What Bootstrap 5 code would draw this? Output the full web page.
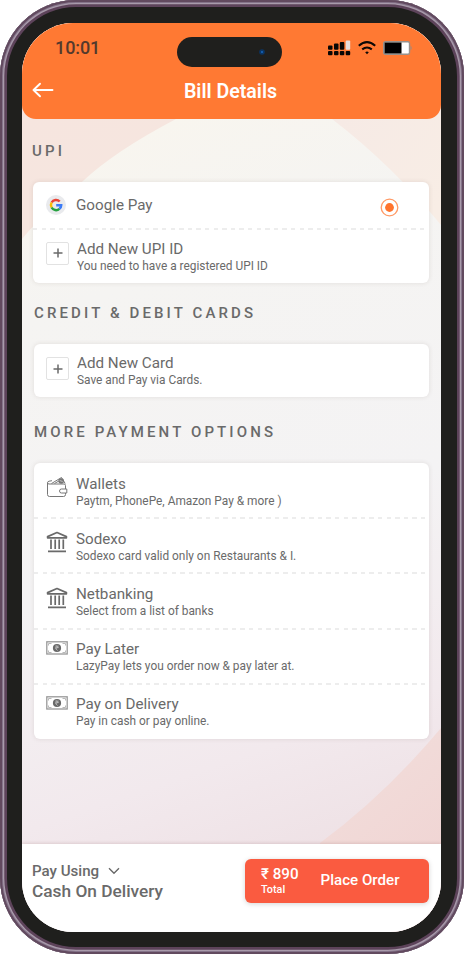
<!DOCTYPE html>
<html lang="en">
<head>
<meta charset="utf-8">
<meta name="viewport" content="width=device-width, initial-scale=1">
<title>Bill Details</title>
<link href="https://cdn.jsdelivr.net/npm/bootstrap@5.3.0/dist/css/bootstrap.min.css" rel="stylesheet">
<style>
body{font-family:Roboto,"Noto Sans",sans-serif;background:#fff;color:#6a6a6a;overflow:hidden}
.phone{width:464px;height:954px;border-radius:76px;background:#1f1f1d;padding:23px 23px 22px 22px;box-shadow:inset 0 0 0 2px #624a5f,inset 0 0 0 3px #85748a,inset 0 0 0 4.3px #a99bab,inset 0 0 0 7px #5d435a}
.screen{border-radius:51px;background:#f5f3f2;isolation:isolate}
.backdrop{inset:0;z-index:-1}
.topbar{height:96px;background:#ff7933;border-radius:0 0 14px 14px}
.statusline{height:50px;padding-left:33px;padding-right:28px}
.clock{font-size:18px;font-weight:500;color:#54392c;width:122px;line-height:20px;letter-spacing:-.1px}
.island{width:105px;height:30px;border-radius:15px;background:#1f1f1d;margin-top:7px;padding-right:17px}
.titleline{height:34px}
.titleline h1{font-size:19.6px;font-weight:600;color:#fff;line-height:24px;padding-top:3px}
.side{width:42px;padding-left:10px}
.side-end{width:44px}
.content{padding:0 12px}
.heading{font-size:15px;font-weight:500;line-height:18px;letter-spacing:3.12px;color:#6a6a6a;margin:0}
.panel{background:#fff;border-radius:6px;box-shadow:0 0 5px rgba(60,40,30,.11)}
.opt{padding:11px 12px 0 13px}
.opt-more{padding-left:12px;padding-top:11.500px}
.dashes{height:2px;margin:-1px 0;background:repeating-linear-gradient(90deg,#ededed 0 4.4px,transparent 4.4px 8.6px)}
.glyph{width:30px;flex:none}
.ttl{font-size:15.200px;line-height:18px;color:#6a6a6a}
.sub{font-size:11.880px;line-height:16px;color:#6a6a6a}
.plusbox{width:23px;height:23px;border:1px solid #e2e2e2;border-radius:2px}
.paybar{height:88px;background:#fff;padding:15px 12px 0 10px;box-shadow:0 -1px 3px rgba(120,50,50,.16)}
.using{font-size:15.100px;font-weight:500;line-height:20px}
.method{font-size:17.300px;font-weight:500;line-height:21px}
.order{width:184px;height:44px;border:0;border-radius:6px;background:#fa5b40;color:#fff;padding:0 0 0 16px;box-shadow:0 1px 5px rgba(0,0,0,.17)}
.amount{font-size:15.200px;font-weight:500;line-height:17px}
.total{font-size:10.800px;font-weight:500;line-height:13px}
.place{font-size:15.100px;font-weight:500;margin-left:22px;margin-top:-1px}
</style>
<script src="https://cdn.jsdelivr.net/npm/bootstrap@5.3.0/dist/js/bootstrap.bundle.min.js"></script>
</head>
<body>
<svg width="0" height="0" class="position-absolute">
  <defs>
    <symbol id="bank" viewBox="0 0 22 22"><path d="M1.600 6.800V5.600L11 1.500l9.400 4.100v1.200z" fill="none" stroke="#6a6a6a" stroke-width="1.700" stroke-linejoin="round"/><path d="M5 8.500v9.500M9.200 8.500v9.500M13.200 8.500v9.500M17.300 8.500v9.500M2 20.300h18" stroke="#6a6a6a" stroke-width="1.700" fill="none"/></symbol>
    <symbol id="cash" viewBox="0 0 22 14"><rect x=".8" y=".8" width="20.400" height="12.200" fill="none" stroke="#999" stroke-width="1.300"/><path d="M2.500 4.500V2.500h3M16.500 2.500h3v2M2.500 9.500v2h3M19.500 9.500v2h-3" fill="none" stroke="#b0b0b0" stroke-width=".9"/><circle cx="11" cy="7" r="4.100" fill="#686868"/><path d="M9.200 5.100h3.500M9.200 6.600h3.500M10 5.100c3 0 2 2.500-.5 2.500l2.200 2" fill="none" stroke="#ccc" stroke-width=".7"/></symbol>
    <symbol id="plus" viewBox="0 0 10 10"><path d="M5 .5v9M.5 5h9" stroke="#6a6a6a" stroke-width="1.500"/></symbol>
  </defs>
</svg>
<main class="phone">
  <div class="screen d-flex flex-column h-100 overflow-hidden position-relative">
    <svg class="backdrop position-absolute" width="419" height="909" viewBox="22 23 419 909">
      <defs>
        <linearGradient id="base" gradientUnits="userSpaceOnUse" x1="80" y1="60" x2="380" y2="920"><stop offset="0" stop-color="#faf6ed"/><stop offset=".25" stop-color="#f5f4f2"/><stop offset=".55" stop-color="#f4f3f4"/><stop offset=".78" stop-color="#f2e9ed"/><stop offset="1" stop-color="#ecdce0"/></linearGradient>
        <linearGradient id="peach" gradientUnits="userSpaceOnUse" x1="22" y1="119" x2="60" y2="230"><stop offset="0" stop-color="#f6e5df"/><stop offset="1" stop-color="#f6e6df"/></linearGradient>
        <linearGradient id="peachEnd" gradientUnits="userSpaceOnUse" x1="340" y1="119" x2="441" y2="200"><stop offset="0" stop-color="#f6eae5"/><stop offset="1" stop-color="#f8ede5"/></linearGradient>
        <linearGradient id="rose" x1="0" y1="0" x2=".5" y2="1"><stop offset="0" stop-color="#f2dfdc"/><stop offset="1" stop-color="#f0d4d3"/></linearGradient>
      </defs>
      <path fill="url(#base)" d="M22 23h419v909H22z"/>
      <path fill="url(#peach)" d="M22 23H300L176 119Q115 151 83 181Q45 211 22 239z"/>
      <path fill="url(#peachEnd)" d="M260 23H441V225Q392 165 332 119z"/>
      <path fill="url(#rose)" d="M441 728Q385 795 320 843V932H441z"/>
    </svg>
    <header class="topbar flex-shrink-0">
      <div class="statusline d-flex align-items-center">
        <div class="clock">10:01</div>
        <div class="island d-flex align-items-center justify-content-end">
          <svg width="6" height="6" viewBox="0 0 6 6"><circle cx="3" cy="3" r="2.800" fill="#0a3565"/><circle cx="3" cy="3" r="1" fill="#1769c0"/></svg>
        </div>
        <div class="d-flex align-items-center ms-auto" style="gap:7px">
          <svg width="23" height="16" viewBox="0 0 23 16"><g fill="#080706"><rect y="5.500" width="4.500" height="4.300" rx="1"/><rect x="6" y="3.500" width="4.500" height="6.300" rx="1"/><rect x="11.800" y="2" width="4.500" height="7.800" rx="1"/><rect y="11" width="4.500" height="4.300" rx="1"/><rect x="6" y="11" width="4.500" height="4.300" rx="1"/><rect x="11.800" y="11" width="4.500" height="4.300" rx="1"/><rect x="17.700" y="11" width="4.500" height="4.300" rx="1"/></g><rect x="17.700" y=".5" width="4.500" height="9.300" rx="1" fill="#e6dedb"/></svg>
          <svg width="18" height="14" viewBox="0 0 18 14"><path d="M.8 4.800Q9-2.400 17.200 4.800M4.200 8.400Q9 4.600 13.800 8.400" fill="none" stroke="#0c0806" stroke-width="2.100"/><path d="M7.200 11.300Q9 9.900 10.800 11.300L9 13.200z" fill="#0c0806"/></svg>
          <svg width="30" height="14" viewBox="0 0 30 14"><rect x=".7" y=".7" width="25.800" height="12.600" rx="1.500" fill="#fff" stroke="#98918c" stroke-width="1.400"/><path fill="#000" d="M1.500 1.500h17v11h-17z"/><path d="M27.500 4.500Q30 7 27.500 9.500z" fill="#a48a7a"/></svg>
        </div>
      </div>
      <div class="titleline d-flex align-items-center">
        <div class="side d-flex"><svg width="22" height="16" viewBox="0 0 22 16"><path d="M8 1.700L1.500 8 8 14.300M1.500 8H20.500" fill="none" stroke="#fff" stroke-width="1.900" stroke-linecap="round" stroke-linejoin="round"/></svg></div>
        <h1 class="flex-grow-1 text-center mb-0">Bill Details</h1>
        <div class="side-end"></div>
      </div>
    </header>
    <div class="content flex-grow-1">
      <h2 class="heading" style="margin:23px 0 22px -2px">UPI</h2>
      <section class="panel d-flex flex-column" style="height:101px;margin-left:-1px">
        <div class="opt d-flex align-items-center pt-0" style="height:46.500px">
          <div class="glyph"><svg width="20" height="20" viewBox="0 0 20 20" style="margin-top:-2px"><circle cx="10" cy="10" r="10" fill="#e9eaed"/><g fill="none" stroke-width="2.500"><path d="M5.600 7.500A5.100 5.100 0 0 1 13.700 6.500" stroke="#ea4335"/><path d="M5.600 7.500a5.100 5.100 0 0 0 0 5" stroke="#fbbc05"/><path d="M5.600 12.500a5.100 5.100 0 0 0 7.800 1.400" stroke="#24a13e"/><path d="M13.400 13.900A5 5 0 0 0 15.200 10.200H10.200" stroke="#3b7bf6"/></g></svg></div>
          <div class="ttl flex-grow-1">Google Pay</div>
          <svg width="19" height="19" viewBox="0 0 19 19" style="margin:4px 18px 0 0"><circle cx="9.500" cy="9.500" r="8.300" fill="#fff" stroke="#ff9a66" stroke-width="1.300"/><circle cx="9.500" cy="9.500" r="4.400" fill="#ff742d"/></svg>
        </div>
        <div class="dashes"></div>
        <div class="opt d-flex">
          <div class="glyph me-0" style="width:31px"><div class="plusbox d-flex align-items-center justify-content-center" style="margin-top:2px"><svg width="10" height="10"><use href="#plus"/></svg></div></div>
          <div><div class="ttl">Add New UPI ID</div><div class="sub">You need to have a registered UPI ID</div></div>
        </div>
      </section>
      <h2 class="heading" style="margin:21px 0 22px">CREDIT &amp; DEBIT CARDS</h2>
      <section class="panel" style="height:53px">
        <div class="opt d-flex" style="padding-top:10px;padding-left:12px">
          <div class="glyph" style="width:31px"><div class="plusbox d-flex align-items-center justify-content-center" style="margin-top:3px"><svg width="10" height="10"><use href="#plus"/></svg></div></div>
          <div><div class="ttl">Add New Card</div><div class="sub">Save and Pay via Cards.</div></div>
        </div>
      </section>
      <h2 class="heading" style="margin:26px 0 22px">MORE PAYMENT OPTIONS</h2>
      <section class="panel d-flex flex-column" style="height:276px">
        <div class="opt opt-more d-flex flex-fill"><div class="glyph">
          <svg width="22" height="22" viewBox="0 0 22 22"><g fill="none" stroke="#777" stroke-width="1"><path d="M19.500 13V9.500Q19.500 8 18 8H3Q1.500 8 1.500 6.800M1.500 6.800V18.500Q1.500 20.500 3.500 20.500H17.500Q19.500 20.500 19.500 18.500V17"/><path d="M20.800 13H15.500q-2 0-2 2t2 2h5.300z"/><path d="M1.500 6.800Q1.500 5.500 3 5.200L6 4.700M5.500 7.500L15.500 1.500l3.700 6M8.500 7.500l7-4"/></g><circle cx="15.200" cy="5" r="2.800" fill="#777"/><path d="M13.700 4.500l3 1" stroke="#ddd" stroke-width=".7"/></svg>
        </div><div><div class="ttl">Wallets</div><div class="sub">Paytm, PhonePe, Amazon Pay &amp; more )</div></div></div>
        <div class="dashes"></div>
        <div class="opt opt-more d-flex flex-fill"><div class="glyph"><svg width="22" height="22"><use href="#bank"/></svg></div><div><div class="ttl">Sodexo</div><div class="sub">Sodexo card valid only on Restaurants &amp; I.</div></div></div>
        <div class="dashes"></div>
        <div class="opt opt-more d-flex flex-fill"><div class="glyph"><svg width="22" height="22"><use href="#bank"/></svg></div><div><div class="ttl">Netbanking</div><div class="sub">Select from a list of banks</div></div></div>
        <div class="dashes"></div>
        <div class="opt opt-more d-flex flex-fill"><div class="glyph"><svg class="d-block" width="22" height="14" style="margin-top:1px"><use href="#cash"/></svg></div><div><div class="ttl">Pay Later</div><div class="sub">LazyPay lets you order now &amp; pay later at.</div></div></div>
        <div class="dashes"></div>
        <div class="opt opt-more d-flex flex-fill"><div class="glyph"><svg class="d-block" width="22" height="14" style="margin-top:1px"><use href="#cash"/></svg></div><div><div class="ttl">Pay on Delivery</div><div class="sub">Pay in cash or pay online.</div></div></div>
      </section>
    </div>
    <footer class="paybar d-flex align-items-start justify-content-between flex-shrink-0">
      <div>
        <div class="using d-flex align-items-center" style="margin-top:2px">Pay Using <svg width="12" height="8" viewBox="0 0 12 8" style="margin-left:9px"><path d="M1 1.200l5 5 5-5" fill="none" stroke="#6a6a6a" stroke-width="1.400"/></svg></div>
        <div class="method">Cash On Delivery</div>
      </div>
      <button class="order d-flex align-items-center text-start" type="button">
        <span><span class="amount d-block">₹ 890</span><span class="total d-block">Total</span></span>
        <span class="place">Place Order</span>
      </button>
    </footer>
  </div>
</main>
</body>
</html>
